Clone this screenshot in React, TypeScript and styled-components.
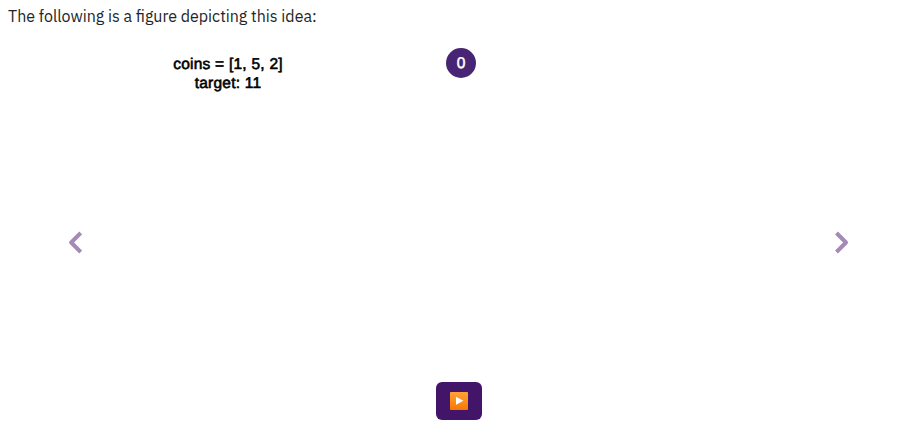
import React from "react";
import styled, { createGlobalStyle } from "styled-components";

const GlobalStyle = createGlobalStyle`
  body {
    margin: 0;
    background: #fff;
  }
  button {
    padding: 0;
    border: 0;
    background: none;
    cursor: pointer;
  }
`;

const Page = styled.main`
  box-sizing: border-box;
  height: 438px;
  overflow: hidden;
  display: flex;
  flex-direction: column;
  padding: 4px 0 18px;
`;

const Caption = styled.p`
  margin: 0 0 16px 8px;
  font: 400 16px/24px "IBM Plex Sans", Roboto, sans-serif;
  color: #212529;
  white-space: nowrap;
`;

const Carousel = styled.section`
  flex: 1;
  display: grid;
  grid-template-columns: 150px 1fr 116px;
`;

const ArrowButton = styled.button<{ $inset: number }>`
  display: flex;
  align-items: flex-start;
  padding: 186px 0 0 ${({ $inset }) => $inset}px;
  color: #a58ab8;

  svg {
    display: block;
  }
`;

const Slide = styled.div`
  display: grid;
  grid-template-columns: 156px 1fr;
  align-items: start;
`;

const Problem = styled.div`
  margin-top: 11px;
  text-align: center;
  font: 400 15.5px/19px "Liberation Sans", sans-serif;
  letter-spacing: 0.24px;
  color: #000;
  -webkit-text-stroke: 0.6px #000;
  white-space: nowrap;
  text-rendering: geometricPrecision;
`;

const Node = styled.div`
  width: 30px;
  height: 30px;
  margin: 4px 0 0 140px;
  border-radius: 50%;
  background: #482474;
  color: #fff;
  text-align: center;
  font: 400 15.5px/31px "Liberation Sans", sans-serif;
  -webkit-text-stroke: 0.5px #fff;
  text-rendering: geometricPrecision;
`;

const Controls = styled.div`
  display: flex;
  margin-left: 436px;
`;

const PlayButton = styled.button`
  display: grid;
  place-items: center;
  width: 46px;
  height: 38px;
  background: #421568;
  border-radius: 6px;

  svg {
    display: block;
  }
`;

function Chevron({ points }: { points: string }) {
  return (
    <svg width="14" height="24" viewBox="0 0 14 24" fill="none">
      <polyline points={points} stroke="currentColor" strokeWidth="4" strokeLinejoin="round" />
    </svg>
  );
}

function PlayIcon() {
  return (
    <svg width="18" height="18" viewBox="0 0 18 18">
      <defs>
        <linearGradient id="play-fill" x1="0" y1="0" x2="0" y2="1">
          <stop offset="0" stopColor="#ffa23a" />
          <stop offset="0.55" stopColor="#ff8b19" />
          <stop offset="1" stopColor="#f57804" />
        </linearGradient>
      </defs>
      <rect width="18" height="18" rx="0.8" fill="url(#play-fill)" />
      <path d="M6 4.8 L13.4 8.8 L6 12.8 Z" fill="#fff" />
    </svg>
  );
}

export default function App() {
  return (
    <>
      <GlobalStyle />
      <Page>
        <Caption>The following is a figure depicting this idea:</Caption>
        <Carousel>
          <ArrowButton $inset={68} aria-label="Previous">
            <Chevron points="12.7,3 3.2,12.5 12.7,22" />
          </ArrowButton>
          <Slide>
            <Problem>
              coins = [1, 5, 2]
              <br />
              target: 11
            </Problem>
            <Node>0</Node>
          </Slide>
          <ArrowButton $inset={52} aria-label="Next">
            <Chevron points="1.5,3 11,12.5 1.5,22" />
          </ArrowButton>
        </Carousel>
        <Controls>
          <PlayButton aria-label="Play">
            <PlayIcon />
          </PlayButton>
        </Controls>
      </Page>
    </>
  );
}
